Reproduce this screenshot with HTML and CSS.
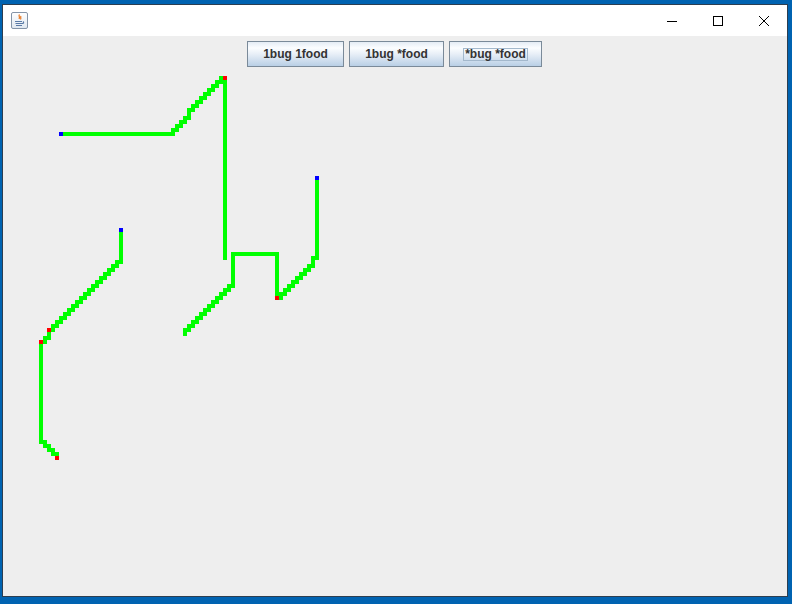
FILE: index.html
```html
<!DOCTYPE html>
<html>
<head>
<meta charset="utf-8">
<link rel="stylesheet" href="styles.css">
</head>
<body>
<div class="window">
  <div class="titlebar">
    <svg class="app-icon" width="17" height="17" viewBox="0 0 17 17">
      <defs>
        <linearGradient id="ig" x1="0" y1="0" x2="0" y2="1">
          <stop offset="0" stop-color="#ffffff"/>
          <stop offset="1" stop-color="#dfe7f0"/>
        </linearGradient>
      </defs>
      <rect x="0.5" y="0.5" width="16" height="16" rx="1.5" fill="url(#ig)" stroke="#8494a8"/>
      <path d="M8.5 2.5 C7 4 9.5 5 8 7 M10 4 C9 5.5 10.5 6 9.5 7.5" stroke="#e8761e" stroke-width="1.2" fill="none"/>
      <path d="M4 9.5 H11 M4.5 11.5 H11.5 Q13.5 11 12 9.5 M5 13.5 H11" stroke="#5a7aa6" stroke-width="1.1" fill="none"/>
    </svg>
    <div class="controls">
      <div class="ctl"><svg width="10" height="10" viewBox="0 0 10 10"><path d="M0 5.5 H10" stroke="#000" stroke-width="1"/></svg></div>
      <div class="ctl"><svg width="10" height="10" viewBox="0 0 10 10"><rect x="0.5" y="0.5" width="9" height="9" fill="none" stroke="#000" stroke-width="1"/></svg></div>
      <div class="ctl"><svg width="10" height="10" viewBox="0 0 10 10"><path d="M0 0 L10 10 M10 0 L0 10" stroke="#000" stroke-width="1"/></svg></div>
    </div>
  </div>
  <div class="content">
    <div class="toolbar">
      <button class="btn b1">1bug 1food</button>
      <button class="btn b2">1bug *food</button>
      <button class="btn b3"><span class="focus">*bug *food</span></button>
    </div>
    <svg class="canvas" width="784" height="560" viewBox="3 36 784 560" shape-rendering="crispEdges">
      <g fill="#00ff00">
        <!-- path A -->
        <rect x="63" y="132" width="112" height="4"/>
        <rect x="171" y="128" width="8" height="4"/>
        <rect x="175" y="124" width="8" height="4"/>
        <rect x="179" y="120" width="8" height="4"/>
        <rect x="183" y="116" width="8" height="4"/>
        <rect x="187" y="112" width="4" height="4"/>
        <rect x="187" y="108" width="8" height="4"/>
        <rect x="191" y="104" width="8" height="4"/>
        <rect x="195" y="100" width="8" height="4"/>
        <rect x="199" y="96" width="8" height="4"/>
        <rect x="203" y="92" width="8" height="4"/>
        <rect x="207" y="88" width="8" height="4"/>
        <rect x="211" y="84" width="8" height="4"/>
        <rect x="215" y="80" width="8" height="4"/>
        <rect x="219" y="76" width="4" height="4"/>
        <rect x="223" y="80" width="4" height="180"/>
        <!-- path B -->
        <rect x="231" y="252" width="48" height="4"/>
        <rect x="231" y="252" width="4" height="36"/>
        <rect x="275" y="252" width="4" height="44"/>
        <rect x="227" y="284" width="8" height="4"/>
        <rect x="223" y="288" width="8" height="4"/>
        <rect x="219" y="292" width="8" height="4"/>
        <rect x="215" y="296" width="8" height="4"/>
        <rect x="211" y="300" width="8" height="4"/>
        <rect x="207" y="304" width="8" height="4"/>
        <rect x="203" y="308" width="8" height="4"/>
        <rect x="199" y="312" width="8" height="4"/>
        <rect x="195" y="316" width="8" height="4"/>
        <rect x="191" y="320" width="8" height="4"/>
        <rect x="187" y="324" width="8" height="4"/>
        <rect x="183" y="328" width="8" height="4"/>
        <rect x="183" y="332" width="4" height="4"/>
        <rect x="279" y="292" width="4" height="8"/>
        <rect x="279" y="292" width="8" height="4"/>
        <rect x="283" y="288" width="8" height="4"/>
        <rect x="287" y="284" width="8" height="4"/>
        <rect x="291" y="280" width="8" height="4"/>
        <rect x="295" y="276" width="8" height="4"/>
        <rect x="299" y="272" width="8" height="4"/>
        <rect x="303" y="268" width="8" height="4"/>
        <rect x="307" y="264" width="8" height="4"/>
        <rect x="311" y="260" width="4" height="4"/>
        <rect x="311" y="256" width="8" height="4"/>
        <rect x="315" y="180" width="4" height="80"/>
        <!-- path C -->
        <rect x="119" y="232" width="4" height="32"/>
        <rect x="115" y="260" width="8" height="4"/>
        <rect x="111" y="264" width="8" height="4"/>
        <rect x="107" y="268" width="8" height="4"/>
        <rect x="103" y="272" width="8" height="4"/>
        <rect x="99" y="276" width="8" height="4"/>
        <rect x="95" y="280" width="8" height="4"/>
        <rect x="91" y="284" width="8" height="4"/>
        <rect x="87" y="288" width="8" height="4"/>
        <rect x="83" y="292" width="8" height="4"/>
        <rect x="79" y="296" width="8" height="4"/>
        <rect x="75" y="300" width="8" height="4"/>
        <rect x="71" y="304" width="8" height="4"/>
        <rect x="67" y="308" width="8" height="4"/>
        <rect x="63" y="312" width="8" height="4"/>
        <rect x="59" y="316" width="8" height="4"/>
        <rect x="55" y="320" width="8" height="4"/>
        <rect x="51" y="324" width="8" height="4"/>
        <rect x="51" y="328" width="4" height="4"/>
        <rect x="47" y="332" width="4" height="4"/>
        <rect x="43" y="336" width="8" height="4"/>
        <rect x="43" y="340" width="4" height="4"/>
        <rect x="39" y="344" width="4" height="96"/>
        <rect x="39" y="440" width="8" height="4"/>
        <rect x="43" y="444" width="8" height="4"/>
        <rect x="47" y="448" width="8" height="4"/>
        <rect x="51" y="452" width="8" height="4"/>
      </g>
      <g fill="#ff0000">
        <rect x="223" y="76" width="4" height="4"/>
        <rect x="275" y="296" width="4" height="4"/>
        <rect x="47" y="328" width="4" height="4"/>
        <rect x="39" y="340" width="4" height="4"/>
        <rect x="55" y="456" width="4" height="4"/>
      </g>
      <g fill="#0000ff">
        <rect x="59" y="132" width="4" height="4"/>
        <rect x="315" y="176" width="4" height="4"/>
        <rect x="119" y="228" width="4" height="4"/>
      </g>
    </svg>
  </div>
</div>
</body>
</html>
```
FILE: styles.css
```css
html, body {
  margin: 0;
  padding: 0;
}
body {
  width: 792px;
  height: 604px;
  background: #0063b1;
  overflow: hidden;
  box-sizing: border-box;
  padding: 4px 0 0 2px;
}
.window {
  width: 784px;
  border: 1px solid #2c3e50;
  display: flex;
  flex-direction: column;
}
.titlebar {
  height: 31px;
  background: #ffffff;
  display: flex;
  align-items: flex-start;
  justify-content: space-between;
}
.app-icon {
  margin: 7px 0 0 8px;
  display: block;
}
.controls {
  display: flex;
}
.ctl {
  width: 46px;
  height: 31px;
  display: flex;
  align-items: center;
  justify-content: center;
}
.ctl svg {
  display: block;
}
.content {
  position: relative;
  height: 560px;
  background: #eeeeee;
}
.toolbar {
  display: flex;
  justify-content: center;
  gap: 5px;
  padding-top: 5px;
  padding-right: 1px;
  position: relative;
  z-index: 1;
}
.btn {
  height: 26px;
  margin: 0;
  padding: 0;
  border: 1px solid #7a8a99;
  border-radius: 0;
  background: linear-gradient(to bottom, #e4ecf5 0%, #fbfdff 25%, #e8eff7 50%, #b9cfe5 100%);
  font-family: "Liberation Sans", Arial, sans-serif;
  font-weight: bold;
  font-size: 12px;
  color: #333333;
  display: flex;
  align-items: center;
  justify-content: center;
}
.b1 { width: 97px; }
.b2 { width: 95px; }
.b3 { width: 93px; }
.focus {
  border: 1px solid #a3b8cc;
  padding: 0 1px;
  line-height: 11px;
  height: 11px;
}
.canvas {
  position: absolute;
  left: 0;
  top: 0;
  display: block;
}
```
